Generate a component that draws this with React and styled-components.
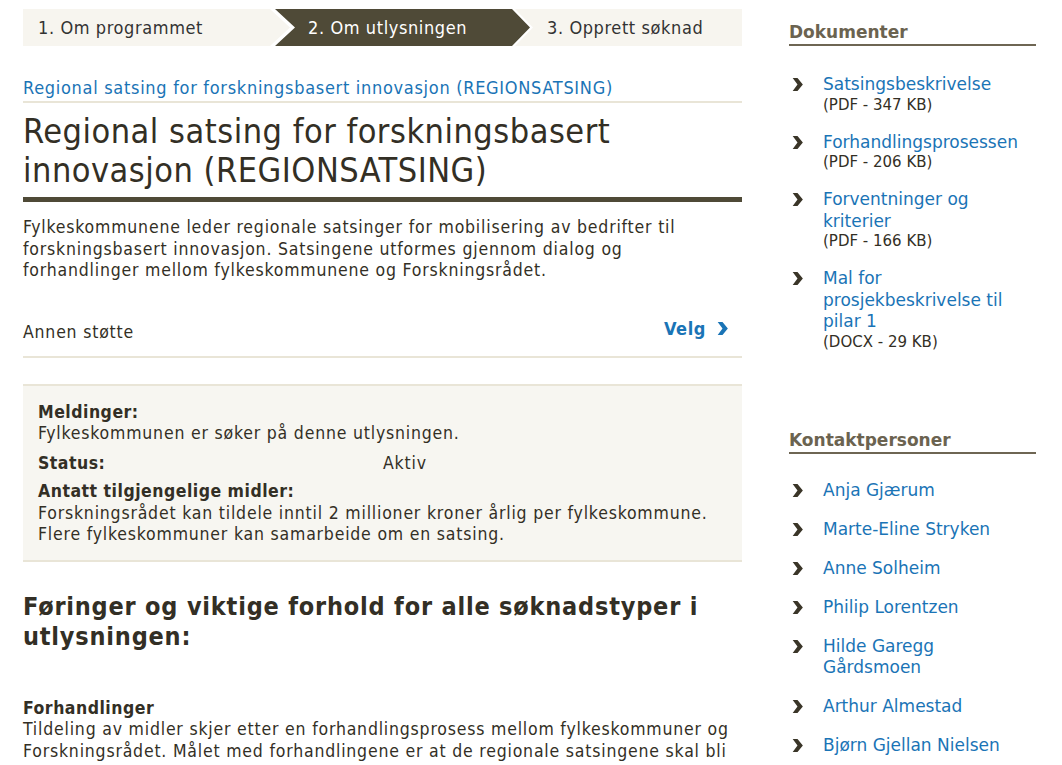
import React from "react";
import styled, { createGlobalStyle } from "styled-components";

const GlobalStyle = createGlobalStyle`
  body {
    margin: 0;
    background: #fff;
  }
`;

const Page = styled.div`
  display: flex;
  align-items: flex-start;
  gap: 47px;
  padding: 9px 0 0 23px;
  width: 1062px;
  height: 765px;
  box-sizing: border-box;
  overflow: hidden;
  font-family: "DejaVu Sans Condensed", "Liberation Sans Narrow", "DejaVu Sans", sans-serif;
  color: #332f25;
`;

const Main = styled.div`
  width: 719px;
  flex-shrink: 0;
`;

const Steps = styled.div`
  display: flex;
  height: 37px;
  background: #f7f5ef;
  font-size: 18px;
  letter-spacing: 0.6px;
`;

const Step = styled.div`
  flex: ${(p) => (p.$grow ? "1 1 auto" : `0 0 ${p.$w}px`)};
  box-sizing: border-box;
  display: flex;
  align-items: center;
  padding-left: ${(p) => p.$pad}px;
  color: #333;
`;

const ActiveStep = styled.div`
  flex: 0 0 263px;
  display: flex;
  padding: 0 3px 0 5px;
  box-sizing: border-box;
  background: #fff;
  clip-path: polygon(0 0, calc(100% - 18px) 0, 100% 50%, calc(100% - 18px) 100%, 0 100%, 20px 50%);
`;

const ActiveInner = styled.div`
  flex: 1;
  display: flex;
  align-items: center;
  padding-left: 33px;
  background: #4f4a37;
  color: #fff;
  clip-path: polygon(0 0, calc(100% - 18px) 0, 100% 50%, calc(100% - 18px) 100%, 0 100%, 20px 50%);
`;

const Crumb = styled.a`
  display: block;
  margin-top: 31px;
  padding-bottom: 3px;
  border-bottom: 2px solid #e9e5d7;
  color: #1a74b6;
  font-size: 18px;
  letter-spacing: 0.7px;
  line-height: 21px;
  text-decoration: none;
`;

const Title = styled.h1`
  margin: 9px 0 0;
  padding-bottom: 7px;
  border-bottom: 5px solid #4f4a37;
  font-size: 34px;
  letter-spacing: 0.5px;
  line-height: 39px;
  font-weight: normal;
  color: #332f25;
`;

const Lead = styled.p`
  margin: 15px 0 0;
  font-size: 17.5px;
  letter-spacing: 0.8px;
  line-height: 21.5px;
`;

const SupportRow = styled.div`
  display: flex;
  justify-content: space-between;
  align-items: center;
  margin-top: 32px;
  padding: 0 14px 13px 0;
  border-bottom: 2px solid #e9e5d7;
  font-size: 17.5px;
  letter-spacing: 0.8px;
  line-height: 21px;
`;

const SupportLabel = styled.span`
  padding-top: 8px;
`;

const Velg = styled.a`
  display: flex;
  align-items: center;
  gap: 11px;
  color: #1a74b6;
  font-weight: bold;
  font-size: 18px;
  letter-spacing: 0.6px;
  text-decoration: none;
`;

const InfoBox = styled.div`
  margin-top: 26px;
  padding: 16px 15px 14px;
  background: #f7f6f1;
  border-top: 2px solid #e9e5d7;
  border-bottom: 2px solid #e9e5d7;
  font-size: 17.5px;
  letter-spacing: 0.8px;
  line-height: 21.5px;
`;

const InfoItem = styled.div`
  margin-top: ${(p) => p.$mt || 0}px;
`;

const InfoLabel = styled.div`
  font-weight: bold;
  letter-spacing: 0.5px;
`;

const StatusRow = styled.div`
  display: grid;
  grid-template-columns: 345px 1fr;
  margin-top: 8px;
`;

const SectionHeading = styled.h2`
  margin: 30px 0 0;
  font-size: 25px;
  letter-spacing: 0.8px;
  line-height: 30px;
  font-weight: bold;
  color: #332f25;
`;

const SubHeading = styled.h3`
  margin: 46px 0 0;
  font-size: 17.5px;
  letter-spacing: 0.5px;
  line-height: 21.5px;
  font-weight: bold;
`;

const BodyText = styled.p`
  margin: 0;
  font-size: 17.5px;
  letter-spacing: 0.8px;
  line-height: 21.5px;
`;

const Sidebar = styled.aside`
  width: 247px;
  flex-shrink: 0;
  font-family: "DejaVu Sans", Verdana, sans-serif;
  padding-top: 13px;
`;

const SideHeading = styled.h4`
  margin: ${(p) => p.$mt || 0}px 0 0;
  padding-bottom: 2px;
  border-bottom: 2px solid #6e6653;
  color: #6b6350;
  font-size: 17px;
  line-height: 20px;
  font-weight: bold;
`;

const SideList = styled.ul`
  list-style: none;
  margin: 0;
  padding: ${(p) => p.$top}px 0 0;
  display: flex;
  flex-direction: column;
  gap: ${(p) => p.$gap}px;
`;

const SideItem = styled.li`
  display: flex;
  gap: 20px;
  padding-left: 3px;
`;

const Bullet = styled.span`
  flex-shrink: 0;
  padding-top: 3px;
  width: 11px;
`;

const SideText = styled.div`
  display: flex;
  flex-direction: column;
  width: 205px;
`;

const SideLink = styled.a`
  color: #1a74b6;
  font-size: 17px;
  line-height: 21.5px;
  text-decoration: none;
`;

const FileMeta = styled.span`
  color: #332f25;
  font-size: 15px;
  line-height: 19px;
`;

const Chevron = ({ color = "#3a3528", w = 11, h = 15 }) => (
  <svg width={w} height={h} viewBox="0 0 10 14">
    <path d="M0.5 1 L5 1 L10 7 L5 13 L0.5 13 L5 7 Z" fill={color} />
  </svg>
);

const documents = [
  { title: "Satsingsbeskrivelse", meta: "(PDF - 347 KB)" },
  { title: "Forhandlingsprosessen", meta: "(PDF - 206 KB)" },
  { title: "Forventninger og kriterier", meta: "(PDF - 166 KB)" },
  { title: "Mal for prosjekbeskrivelse til pilar 1", meta: "(DOCX - 29 KB)" },
];

const contacts = [
  "Anja Gjærum",
  "Marte-Eline Stryken",
  "Anne Solheim",
  "Philip Lorentzen",
  "Hilde Garegg Gårdsmoen",
  "Arthur Almestad",
  "Bjørn Gjellan Nielsen",
];

export default function App() {
  return (
    <>
      <GlobalStyle />
      <Page>
        <Main>
          <Steps>
            <Step $w={247} $pad={15}>1. Om programmet</Step>
            <ActiveStep>
              <ActiveInner>2. Om utlysningen</ActiveInner>
            </ActiveStep>
            <Step $grow $pad={14}>3. Opprett søknad</Step>
          </Steps>

          <Crumb href="#">Regional satsing for forskningsbasert innovasjon (REGIONSATSING)</Crumb>
          <Title>Regional satsing for forskningsbasert innovasjon (REGIONSATSING)</Title>
          <Lead>
            Fylkeskommunene leder regionale satsinger for mobilisering av bedrifter til
            forskningsbasert innovasjon. Satsingene utformes gjennom dialog og
            forhandlinger mellom fylkeskommunene og Forskningsrådet.
          </Lead>

          <SupportRow>
            <SupportLabel>Annen støtte</SupportLabel>
            <Velg href="#">
              Velg <Chevron color="#1a74b6" w={11} h={15} />
            </Velg>
          </SupportRow>

          <InfoBox>
            <InfoItem>
              <InfoLabel>Meldinger:</InfoLabel>
              <div>Fylkeskommunen er søker på denne utlysningen.</div>
            </InfoItem>
            <StatusRow>
              <InfoLabel>Status:</InfoLabel>
              <span>Aktiv</span>
            </StatusRow>
            <InfoItem $mt={7}>
              <InfoLabel>Antatt tilgjengelige midler:</InfoLabel>
              <div>
                Forskningsrådet kan tildele inntil 2 millioner kroner årlig per fylkeskommune.
                Flere fylkeskommuner kan samarbeide om en satsing.
              </div>
            </InfoItem>
          </InfoBox>

          <SectionHeading>Føringer og viktige forhold for alle søknadstyper i utlysningen:</SectionHeading>
          <SubHeading>Forhandlinger</SubHeading>
          <BodyText>
            Tildeling av midler skjer etter en forhandlingsprosess mellom fylkeskommuner og
            Forskningsrådet. Målet med forhandlingene er at de regionale satsingene skal bli
          </BodyText>
        </Main>

        <Sidebar>
          <SideHeading>Dokumenter</SideHeading>
          <SideList $top={28} $gap={17}>
            {documents.map((d) => (
              <SideItem key={d.title}>
                <Bullet><Chevron /></Bullet>
                <SideText>
                  <SideLink href="#">{d.title}</SideLink>
                  <FileMeta>{d.meta}</FileMeta>
                </SideText>
              </SideItem>
            ))}
          </SideList>

          <SideHeading $mt={78}>Kontaktpersoner</SideHeading>
          <SideList $top={26} $gap={17}>
            {contacts.map((c) => (
              <SideItem key={c}>
                <Bullet><Chevron /></Bullet>
                <SideText>
                  <SideLink href="#">{c}</SideLink>
                </SideText>
              </SideItem>
            ))}
          </SideList>
        </Sidebar>
      </Page>
    </>
  );
}
